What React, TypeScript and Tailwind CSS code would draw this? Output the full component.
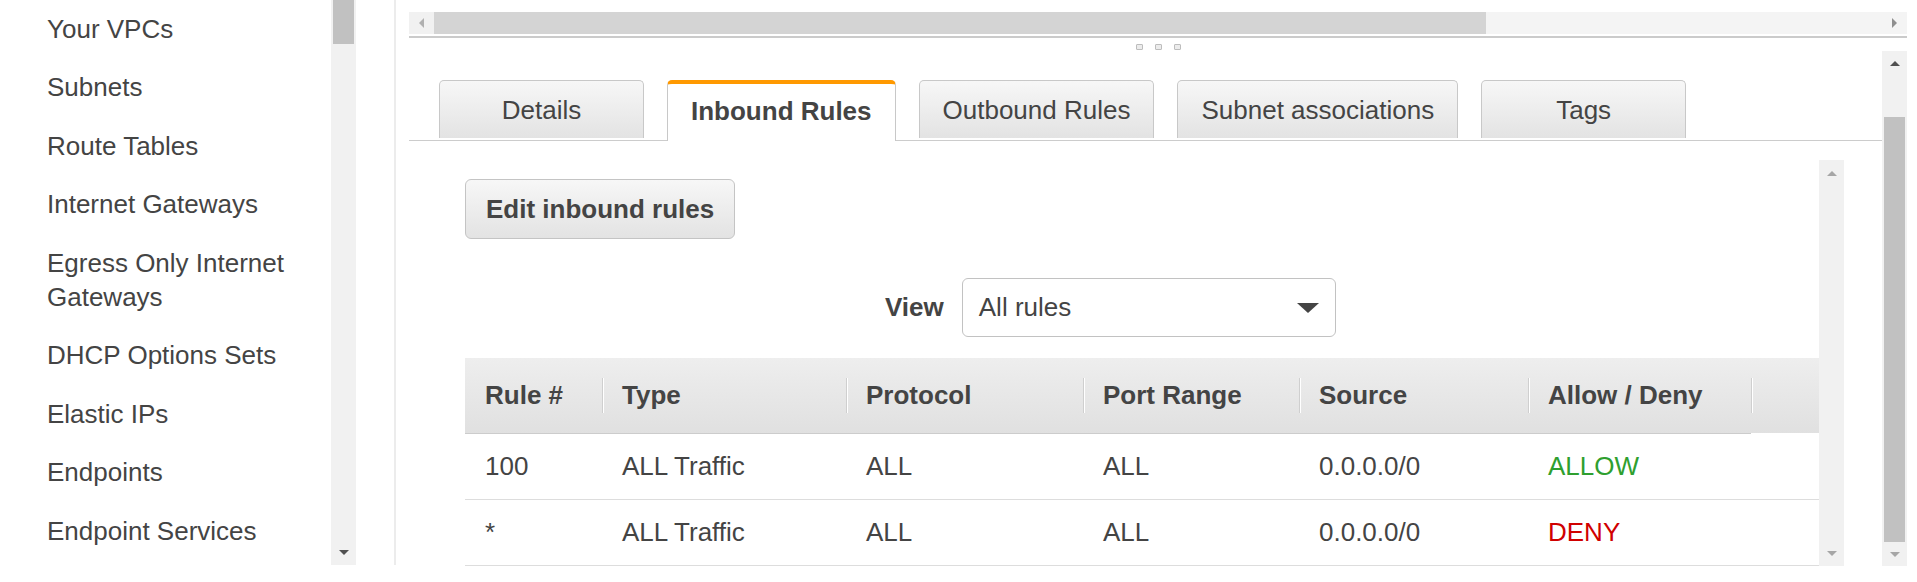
import React from "react";

type Dir = "up" | "down" | "left" | "right";

const navItems = [
  "Your VPCs",
  "Subnets",
  "Route Tables",
  "Internet Gateways",
  "Egress Only Internet Gateways",
  "DHCP Options Sets",
  "Elastic IPs",
  "Endpoints",
  "Endpoint Services",
];

const tabs = [
  { label: "Details", active: false },
  { label: "Inbound Rules", active: true },
  { label: "Outbound Rules", active: false },
  { label: "Subnet associations", active: false },
  { label: "Tags", active: false },
];

const rules = [
  { num: "100", type: "ALL Traffic", protocol: "ALL", range: "ALL", source: "0.0.0.0/0", action: "ALLOW" },
  { num: "*", type: "ALL Traffic", protocol: "ALL", range: "ALL", source: "0.0.0.0/0", action: "DENY" },
];

const headers = ["Rule #", "Type", "Protocol", "Port Range", "Source", "Allow / Deny", ""];

// small scrollbar arrow
const Arrow = ({ dir, className }: { dir: Dir; className: string }) => {
  const vertical = dir === "up" || dir === "down";
  const pts = {
    up: "0,5 5,0 10,5",
    down: "0,0 10,0 5,5",
    left: "5,0 5,10 0,5",
    right: "0,0 0,10 5,5",
  }[dir];
  return (
    <svg
      width={vertical ? 10 : 5}
      height={vertical ? 5 : 10}
      viewBox={vertical ? "0 0 10 5" : "0 0 5 10"}
      className={className}
    >
      <polygon points={pts} fill="currentColor" />
    </svg>
  );
};

const Sidebar = () => (
  <aside className="flex h-[565px] w-[356px] shrink-0">
    <nav className="h-full w-[331px] overflow-hidden">
      {navItems.map((item) => (
        <div key={item} className="py-[12px] pl-[47px] pr-[20px] text-[26px] leading-[34.4px] text-[#444]">
          {item}
        </div>
      ))}
    </nav>
    <div className="flex h-full w-[25px] flex-col bg-[#f1f1f1]">
      <div className="mx-[2px] h-[44px] bg-[#c1c1c1]" />
      <div className="flex-1" />
      <div className="flex h-[25px] items-center justify-center">
        <Arrow dir="down" className="text-[#505050]" />
      </div>
    </div>
  </aside>
);

const Tab = ({ label, active }: { label: string; active: boolean }) =>
  active ? (
    <div className="-mb-px flex h-[61px] items-center justify-center rounded-t-[5px] border-x border-t-[4px] border-x-[#c8c8c8] border-t-[#f90] bg-white px-[23px] pb-[2px] text-[26px] font-bold text-[#444]">
      {label}
    </div>
  ) : (
    <div className="mb-[2px] flex h-[58px] min-w-[205px] items-center justify-center rounded-t-[5px] border-x border-t border-[#c8c8c8] bg-linear-to-b from-[#f7f7f7] to-[#e3e3e3] px-[23px] pt-px text-[26px] text-[#444]">
      {label}
    </div>
  );

const RulesTable = () => (
  <div className="mt-[21px] w-full text-[26px]">
    <div className="grid h-[76px] grid-cols-[137px_244px_237px_216px_229px_223px_1fr] bg-linear-to-b from-[#eeeeee] to-[#e0e0e0] font-bold text-[#444]">
      {headers.map((h, i) => (
        <div
          key={i}
          className={`flex items-center border-b ${i === 6 ? "border-b-white" : "border-b-[#cccccc]"}`}
        >
          {i === 0 ? (
            <span className="pl-[20px]">{h}</span>
          ) : (
            <>
              <span className="h-[35px] w-[2px] border-l border-[#cfcfcf] bg-white" />
              <span className="ml-[18px]">{h}</span>
            </>
          )}
        </div>
      ))}
    </div>
    {rules.map((r) => (
      <div
        key={r.num}
        className="grid h-[66px] grid-cols-[137px_244px_237px_216px_229px_223px_1fr] items-center border-b border-[#dddddd] text-[#444]"
      >
        <span className="pl-[20px]">{r.num}</span>
        <span className="pl-[20px]">{r.type}</span>
        <span className="pl-[20px]">{r.protocol}</span>
        <span className="pl-[20px]">{r.range}</span>
        <span className="pl-[20px]">{r.source}</span>
        <span className={`pl-[20px] ${r.action === "ALLOW" ? "text-[#2f9f2f]" : "text-[#d00000]"}`}>
          {r.action}
        </span>
        <span />
      </div>
    ))}
  </div>
);

export default function App() {
  return (
    <div className="flex h-[582px] w-[1917px] items-start overflow-hidden bg-white font-['Liberation_Sans',Arial,Helvetica,sans-serif] text-[#444]">
      <Sidebar />
      <div className="ml-[38px] h-[565px] w-[2px] shrink-0 bg-[#ececec]" />
      <main className="ml-[13px] flex h-[566px] w-[1498px] shrink-0 flex-col">
        {/* top horizontal scrollbar */}
        <div className="h-[12px]" />
        <div className="flex h-[22px] bg-[#f4f4f4]">
          <div className="flex w-[25px] items-center justify-center bg-[#f1f1f1]">
            <Arrow dir="left" className="text-[#b0b0b0]" />
          </div>
          <div className="w-[1052px] bg-[#d4d4d4]" />
          <div className="flex-1" />
          <div className="flex w-[25px] items-center justify-center">
            <Arrow dir="right" className="text-[#8f8f8f]" />
          </div>
        </div>
        <div className="mt-[2px] h-[2px] bg-[#cbcbcb]" />
        {/* resize grip */}
        <div className="flex h-[13px] items-end justify-center gap-[12px] pb-px">
          {[0, 1, 2].map((d) => (
            <span key={d} className="h-[6px] w-[7px] rounded-[1px] border border-[#bdbdbd] bg-[#ececec]" />
          ))}
        </div>

        <div className="flex h-[515px]">
          <div className="flex min-w-0 flex-1 flex-col">
            <div className="flex h-[90px] items-end gap-[23px] border-b border-[#cccccc] pl-[30px]">
              {tabs.map((t) => (
                <Tab key={t.label} label={t.label} active={t.active} />
              ))}
            </div>

            <div className="flex min-h-0 flex-1 pl-[56px] pt-[19px]">
              <div className="flex w-[1354px] flex-col">
                <div className="mt-[19px]">
                  <button className="h-[60px] rounded-[6px] border border-[#c4c4c4] bg-linear-to-b from-[#f7f7f7] to-[#e3e3e3] px-[20px] text-[26px] font-bold text-[#444]">
                    Edit inbound rules
                  </button>
                </div>

                <div className="mt-[39px] flex items-center gap-[18px] pl-[420px]">
                  <span className="text-[26px] font-bold text-[#444]">View</span>
                  <div className="flex h-[59px] w-[374px] items-center justify-between rounded-[6px] border border-[#c2c2c2] bg-white pl-[16px] pr-[16px] text-[26px] text-[#444]">
                    <span>All rules</span>
                    <svg width="22" height="10" viewBox="0 0 22 10">
                      <polygon points="0,0 22,0 11,10" fill="#444" />
                    </svg>
                  </div>
                </div>

                <RulesTable />
              </div>

              {/* table scrollbar */}
              <div className="flex h-[406px] w-[25px] flex-col bg-[#f1f1f1]">
                <div className="flex h-[26px] items-center justify-center">
                  <Arrow dir="up" className="text-[#a6a6a6]" />
                </div>
                <div className="flex-1" />
                <div className="flex h-[26px] items-center justify-center">
                  <Arrow dir="down" className="text-[#a6a6a6]" />
                </div>
              </div>
            </div>
          </div>

          {/* pane scrollbar */}
          <div className="flex h-[515px] w-[25px] flex-col bg-[#f1f1f1]">
            <div className="flex h-[25px] items-center justify-center">
              <Arrow dir="up" className="text-[#505050]" />
            </div>
            <div className="h-[41px]" />
            <div className="mx-[2px] h-[425px] bg-[#c1c1c1]" />
            <div className="flex flex-1 items-center justify-center">
              <Arrow dir="down" className="text-[#a6a6a6]" />
            </div>
          </div>
        </div>
      </main>
    </div>
  );
}
